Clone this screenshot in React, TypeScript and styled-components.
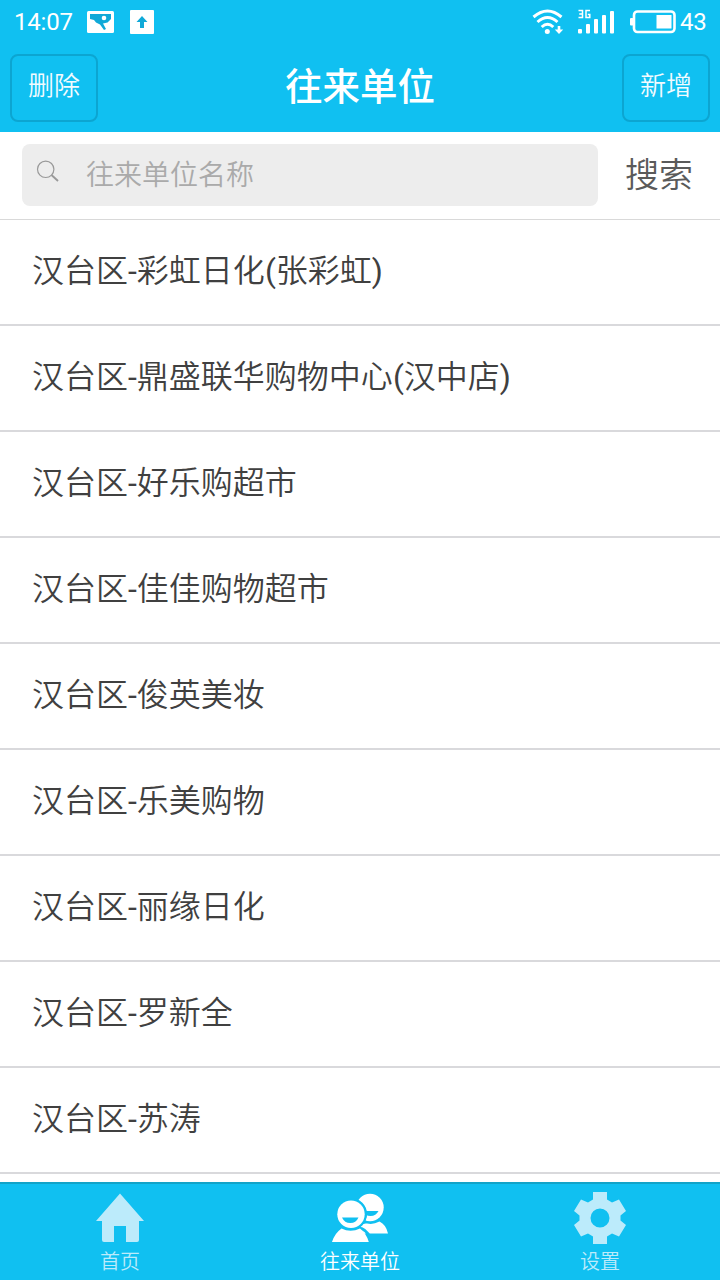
import React from 'react';
import styled, { createGlobalStyle } from 'styled-components';

const Global = createGlobalStyle`
  * { box-sizing: border-box; }
  html, body { margin: 0; padding: 0; background: #fff; overflow: hidden; }
  body, button, input { font-family: Roboto, "Noto Sans CJK SC", sans-serif; font-weight: 350; }
`;

const Screen = styled.div`
  width: 720px;
  height: 1280px;
  display: flex;
  flex-direction: column;
  overflow: hidden;
  background: #fff;
`;

const StatusBar = styled.div`
  height: 44px;
  flex: none;
  display: flex;
  align-items: center;
  justify-content: space-between;
  padding: 0 13px 0 14px;
  background: #10c0f1;
  color: #fff;
`;

const StatusGroup = styled.div`
  display: flex;
  align-items: center;
  svg { display: block; }
`;

const StatusText = styled.span<{ $width: number }>`
  width: ${(p) => p.$width}px;
  font-size: 24px;
  font-weight: 400;
  line-height: 44px;
  letter-spacing: -0.2px;
  white-space: nowrap;
`;

const Header = styled.header`
  height: 88px;
  flex: none;
  display: flex;
  justify-content: space-between;
  padding: 10px;
  background: #10c0f1;
  color: #fff;
`;

const HeaderButton = styled.button`
  width: 88px;
  height: 68px;
  padding: 0 0 5px;
  border: 2px solid #0ca5d1;
  border-radius: 8px;
  background: transparent;
  color: #f2fbff;
  font-size: 26px;
  line-height: 56px;
`;

const Title = styled.h1`
  margin: 0;
  font-size: 37.5px;
  font-weight: 500;
  line-height: 67px;
`;

const SearchBar = styled.div`
  height: 88px;
  flex: none;
  display: flex;
  padding: 12px 0 0 22px;
  border-bottom: 1px solid #d9d9d9;
`;

const SearchField = styled.label`
  width: 576px;
  height: 62px;
  display: flex;
  padding-left: 14px;
  border-radius: 8px;
  background: #ededed;
  svg { flex: none; margin-top: 15px; }
`;

const SearchInput = styled.input`
  width: 480px;
  height: 62px;
  margin-left: 26px;
  padding: 0;
  border: 0;
  outline: 0;
  background: transparent;
  font-size: 28px;
  &::placeholder { color: #aaa; opacity: 1; }
`;

const SearchButton = styled.button`
  flex: 1;
  height: 57px;
  padding: 0;
  border: 0;
  background: transparent;
  color: #5a5a5a;
  font-size: 34px;
`;

const List = styled.ul`
  flex: 1;
  min-height: 0;
  margin: 0;
  padding: 0;
  list-style: none;
  overflow: hidden;
`;

const Row = styled.li`
  height: 106px;
  padding-left: 32px;
  border-bottom: 2px solid #d9d9dc;
  color: #404040;
  font-size: 32px;
  line-height: 102px;
  white-space: nowrap;
`;

const Punctuation = styled.span`
  font-weight: 400;
`;

const TabBar = styled.nav`
  height: 98px;
  flex: none;
  display: flex;
  border-top: 2px solid #12a3c8;
  background: #10c0f1;
`;

const Tab = styled.a<{ $active?: boolean }>`
  flex: 1;
  display: flex;
  flex-direction: column;
  align-items: center;
  padding-top: 6px;
  color: ${(p) => (p.$active ? '#fff' : '#bcebfb')};
  font-size: 20px;
  line-height: 28px;
  svg { display: block; margin-bottom: 4px; }
`;

const PhotoIcon = styled.svg`margin-left: 14px;`;
const UploadIcon = styled.svg`margin-left: 16px;`;
const SignalIcon = styled.svg`margin-left: 13px;`;
const BatteryIcon = styled.svg`margin: 0 4px 0 15px;`;

const units = [
  '汉台区-彩虹日化(张彩虹)',
  '汉台区-鼎盛联华购物中心(汉中店)',
  '汉台区-好乐购超市',
  '汉台区-佳佳购物超市',
  '汉台区-俊英美妆',
  '汉台区-乐美购物',
  '汉台区-丽缘日化',
  '汉台区-罗新全',
  '汉台区-苏涛',
];

function UnitName({ name }: { name: string }) {
  return (
    <>
      {name.split(/([-()])/).map((part, i) =>
        i % 2 ? <Punctuation key={i}>{part}</Punctuation> : part
      )}
    </>
  );
}

export default function App() {
  return (
    <Screen>
      <Global />
      <StatusBar>
        <StatusGroup>
          <StatusText $width={59}>14:07</StatusText>
          <PhotoIcon width="27" height="22" viewBox="0 0 27 22">
            <rect width="27" height="22" rx="1.5" fill="#fff" />
            <path d="M3 3H24V8L20.500 11.500L16 12.500L19 18L17 19L13 13.500L9 11.500L7 9L3 8Z" fill="#10a9d8" />
            <circle cx="17" cy="7" r="2.300" fill="#fff" />
          </PhotoIcon>
          <UploadIcon width="24" height="24" viewBox="0 0 24 24">
            <rect width="24" height="24" rx="1" fill="#fff" />
            <path d="M12 6L17.500 12H14V18H10V12H6.500Z" fill="#10a9d8" />
          </UploadIcon>
        </StatusGroup>
        <StatusGroup>
          <svg width="32" height="26" viewBox="0 0 32 26" fill="none" stroke="#fff" strokeWidth="3">
            <path d="M1.500 8Q15.500 -4 29.500 8M5.500 13Q15.500 4 25.500 13M9.700 18Q15.500 12.500 21.300 18" />
            <circle cx="15.300" cy="22.500" r="2.500" fill="#fff" stroke="none" />
            <path d="M27 17V22" strokeWidth="2.600" />
            <path d="M22.800 20.500H31.200L27 25Z" fill="#fff" stroke="none" />
          </svg>
          <SignalIcon width="38" height="26" viewBox="0 0 38 26" fill="#fff">
            <path d="M1.500 1.500H5.500V8.500H1.500M2.200 5H5.500M13 1.500H9V8.500H12.800V5.500H10.800" fill="none" stroke="#fff" strokeWidth="1.500" />
            <rect x="1" y="20" width="4" height="4.500" rx="1" />
            <rect x="9" y="15" width="4" height="9.500" rx="1" />
            <rect x="17" y="10" width="4" height="14.500" rx="1" />
            <rect x="25" y="6" width="4" height="18.500" rx="1" />
            <rect x="33" y="2" width="4" height="22.500" rx="1" />
          </SignalIcon>
          <BatteryIcon width="46" height="24" viewBox="0 0 46 24">
            <rect x="4" y="1.500" width="40.500" height="20.500" rx="3.500" fill="none" stroke="#fff" strokeWidth="2.600" />
            <rect x="0" y="8" width="3.500" height="7.500" rx="1" fill="#fff" />
            <rect x="26.500" y="5" width="15" height="13.500" fill="#fff" />
          </BatteryIcon>
          <StatusText $width={27}>43</StatusText>
        </StatusGroup>
      </StatusBar>
      <Header>
        <HeaderButton>删除</HeaderButton>
        <Title>往来单位</Title>
        <HeaderButton>新增</HeaderButton>
      </Header>
      <SearchBar>
        <SearchField>
          <svg width="24" height="24" viewBox="0 0 24 24" fill="none" stroke="#999">
            <circle cx="9.700" cy="10.300" r="8.200" strokeWidth="1.200" />
            <path d="M15.500 16L22 22" strokeWidth="1.900" />
          </svg>
          <SearchInput placeholder="往来单位名称" />
        </SearchField>
        <SearchButton>搜索</SearchButton>
      </SearchBar>
      <List>
        {units.map((name) => (
          <Row key={name}>
            <UnitName name={name} />
          </Row>
        ))}
      </List>
      <TabBar>
        <Tab>
          <svg width="54" height="54" viewBox="0 0 54 54" fill="#bcebfb">
            <path d="M27 3.500L51 31H46V50Q46 52 44 52H33V36H21V52H11Q9 52 9 50V31H3Z" />
          </svg>
          首页
        </Tab>
        <Tab $active>
          <svg width="60" height="54" viewBox="0 0 60 54">
            <path d="M34 43.500L28 36Q33 33 37 33.500Q43 35 49.500 31.500Q56 34.500 58 43.500Z" fill="#fff" />
            <circle cx="40" cy="17.500" r="13.700" fill="#fff" />
            <path d="M32 21H48.500Q46 26 40.500 26Q35 26 32 21Z" fill="#10c0f1" />
            <circle cx="21" cy="24" r="16" fill="#10c0f1" />
            <path d="M28 38Q36 38 41 49" fill="none" stroke="#10c0f1" strokeWidth="3" />
            <path d="M2 52Q4.500 43.500 11.500 38.500Q20.500 43 30 38.500Q36.500 43.500 38.800 52Z" fill="#fff" />
            <circle cx="21" cy="24.300" r="15.700" fill="#10c0f1" />
            <circle cx="21" cy="24.300" r="13.700" fill="#fff" />
            <path d="M12 27.500H28.500Q26 33 20.300 33Q14.500 33 12 27.500Z" fill="#10c0f1" />
          </svg>
          往来单位
        </Tab>
        <Tab>
          <svg width="54" height="54" viewBox="0 0 54 54" fill="#bcebfb">
            <path fillRule="evenodd" d="M20 2H34V9.500L39 12.500L46 9.500L53 21L47.500 25.500V30.500L53 35L46 46.500L39 43.500L34 46.500V54H20V46.500L15 43.500L8 46.500L1 35L6.500 30.500V25.500L1 21L8 9.500L15 12.500L20 9.500ZM27 18.500A9.500 9.500 0 1 0 27 37.500A9.500 9.500 0 1 0 27 18.500Z" />
          </svg>
          设置
        </Tab>
      </TabBar>
    </Screen>
  );
}
